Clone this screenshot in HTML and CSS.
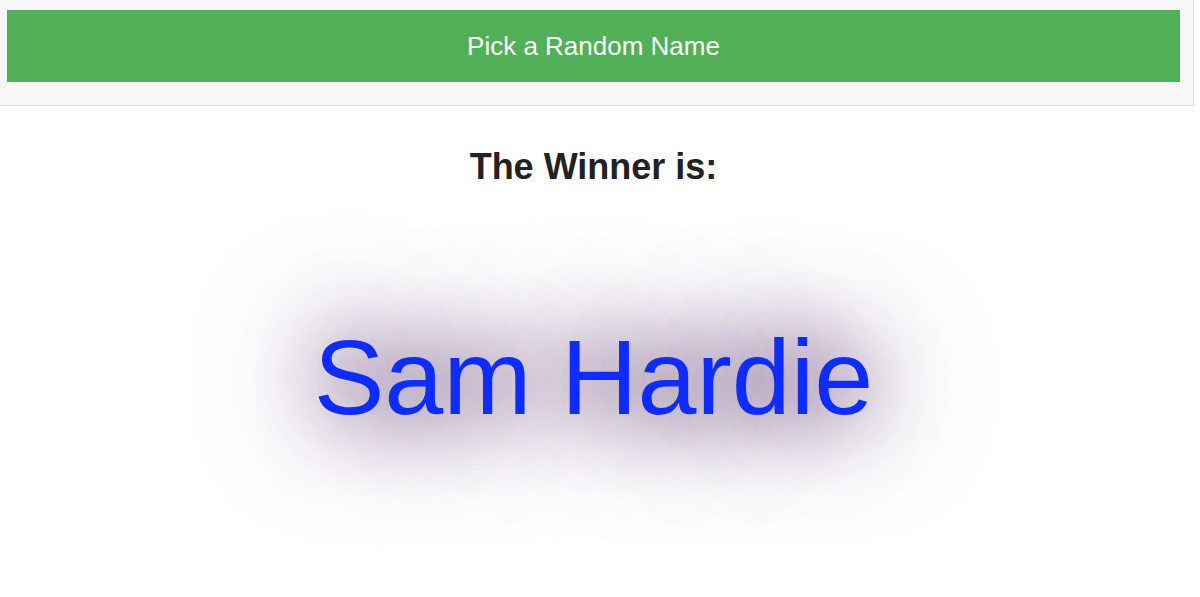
FILE: index.html
```html
<!DOCTYPE html>
<html lang="en">
<head>
    <meta name="viewport" content="width=device-width, initial-scale=1.0">
    <title>Random Name Picker</title>
    <link rel="stylesheet" href="styles.css">
</head>
<body>

    <div class="controls">
        <button class="pick-btn" id="pick">Pick a Random Name</button>
    </div>

    <div class="result">
        <h1 class="title">The Winner is:</h1>
        <div class="winner" id="winner">Sam Hardie</div>
    </div>

</body>
</html>
```

FILE: styles.css
```css
body, html {
    margin: 0;
    background: #fff;
    font-family: "Liberation Sans", Arial, sans-serif;
}

body {
    min-height: 597px;
}

.controls {
    width: 1194px;
    box-sizing: border-box;
    padding: 10px 13px 23px 7px;
    background: #f7f7f7;
    border-right: 1px solid #dcdcdc;
    border-bottom: 1px solid #dcdcdc;
}

.pick-btn {
    display: block;
    width: 100%;
    height: 72px;
    margin: 0;
    border: 0;
    background: #52b058;
    color: #fff;
    font-family: inherit;
    font-size: 26px;
}

.result {
    width: 1187px;
    padding-bottom: 160px;
    text-align: center;
}

.title {
    margin: 43px 0 0;
    font-size: 36px;
    line-height: 1;
    font-weight: bold;
    color: #222;
}

/* glow behind the name */
.winner {
    margin-top: 139px;
    font-size: 106px;
    line-height: 1;
    color: #0f2cff;
    text-shadow: 0 0 75px rgba(60, 20, 80, 0.85), 0 0 130px rgba(80, 30, 100, 1);
}
```
